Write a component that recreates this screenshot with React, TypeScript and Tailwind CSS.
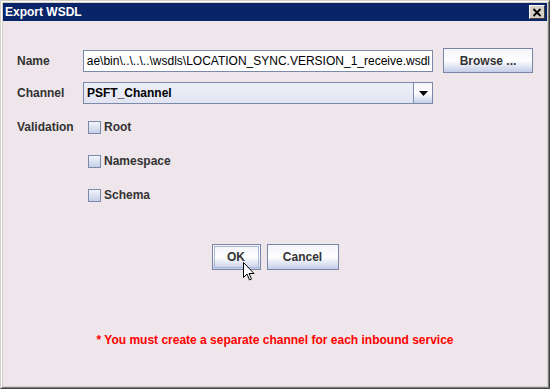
const FONT = "font-['Liberation_Sans',Arial,sans-serif]";

function CloseGlyph() {
  return (
    <svg viewBox="0 0 10 9" className="h-[9px] w-[10px]" fill="none">
      <path d="M1.5 1l7 7M8.5 1l-7 7" stroke="#000" strokeWidth={1.8} />
    </svg>
  );
}

function Cursor() {
  return (
    <svg
      viewBox="0 0 12 20"
      className="pointer-events-none absolute left-[243px] top-[262px] h-[20px] w-[12px]"
    >
      <path
        d="M0.5 0.5v15l3.5-3.5 2.5 6 2-1-2.5-5.5h5z"
        fill="#fff"
        stroke="#000"
        strokeWidth={1}
        strokeLinejoin="miter"
      />
    </svg>
  );
}

function Checkbox({ label }: { label: string }) {
  return (
    <div className="flex h-[20px] items-center gap-[3px]">
      <span className="h-[13px] w-[13px] border border-[#7a8aa8] bg-gradient-to-b from-[#f2f4fb] to-[#c5cfe6]" />
      <span className="text-[12px] font-bold text-[#333]">{label}</span>
    </div>
  );
}

function MetalButton({
  label,
  width,
  focused,
}: {
  label: string;
  width: string;
  focused?: boolean;
}) {
  return (
    <div
      className={`flex items-center justify-center border border-[#7a86a6] bg-gradient-to-b from-[#f3f4fa] via-white to-[#c4cde7] text-[12px] font-bold text-[#333] ${width} ${
        focused ? "outline outline-1 outline-offset-[-3px] outline-[#a8b8d8]" : ""
      }`}
    >
      {label}
    </div>
  );
}

export default function App() {
  return (
    <div className={`${FONT} relative h-[389px] w-[550px]`}>
      <div className="h-full w-full border border-t-[#d4d0c8] border-l-[#d4d0c8] border-r-[#404040] border-b-[#404040]">
        <div className="h-full w-full border border-t-white border-l-white border-r-[#808080] border-b-[#808080]">
          <div className="flex h-full w-full flex-col border border-[#d4d0c8]">
            {/* title bar */}
            <div className="flex h-[18px] items-center justify-between bg-[#0a246a] pl-[2px] pr-[2px]">
              <span className="text-[12px] font-bold text-white">Export WSDL</span>
              <div className="flex h-[14px] w-[16px] items-center justify-center border border-t-white border-l-white border-r-[#404040] border-b-[#404040] bg-[#d4d0c8]">
                <CloseGlyph />
              </div>
            </div>

            {/* body */}
            <div className="flex flex-1 flex-col bg-[#efe6eb] pl-[14px] pr-[14px] pt-[27px]">
              <div className="flex h-[25px] items-center">
                <span className="w-[66px] text-[12px] font-bold text-[#333]">Name</span>
                <div className="flex h-[22px] w-[350px] items-center justify-end overflow-hidden whitespace-nowrap border border-[#7a8aa8] bg-white pr-[2px] text-[12px] text-black">
                  ae\bin\..\..\..\wsdls\LOCATION_SYNC.VERSION_1_receive.wsdl
                </div>
                <div className="ml-[10px] flex h-[25px]">
                  <MetalButton label="Browse ..." width="w-[90px]" />
                </div>
              </div>

              <div className="mt-[9px] flex h-[22px] items-center">
                <span className="w-[66px] text-[12px] font-bold text-[#333]">Channel</span>
                <div className="flex h-[22px] w-[350px] border border-[#7a8aa8] bg-gradient-to-b from-[#eceef8] to-[#e2e4f2]">
                  <span className="flex flex-1 items-center pl-[3px] text-[12px] font-bold text-black">
                    PSFT_Channel
                  </span>
                  <div className="flex w-[19px] items-center justify-center border-l border-[#7a8aa8] bg-gradient-to-b from-[#f3f4fa] via-white to-[#c4cde7]">
                    <svg viewBox="0 0 9 5" className="h-[5px] w-[9px]">
                      <path d="M0 0h9L4.5 5z" fill="#000" />
                    </svg>
                  </div>
                </div>
              </div>

              <div className="mt-[13px] flex">
                <span className="w-[66px] pt-[1px] text-[12px] font-bold text-[#333]">Validation</span>
                <div className="flex flex-col gap-[14px] pl-[5px]">
                  <Checkbox label="Root" />
                  <Checkbox label="Namespace" />
                  <Checkbox label="Schema" />
                </div>
              </div>

              <div className="mt-[39px] flex h-[26px] justify-center gap-[6px]">
                <MetalButton label="OK" width="w-[49px]" focused />
                <MetalButton label="Cancel" width="w-[72px]" />
              </div>

              <div className="mt-[63px] text-center text-[12px] font-bold leading-[14px] text-[#ff0000]">
                * You must create a separate channel for each inbound service
              </div>
            </div>
          </div>
        </div>
      </div>
      <Cursor />
    </div>
  );
}
